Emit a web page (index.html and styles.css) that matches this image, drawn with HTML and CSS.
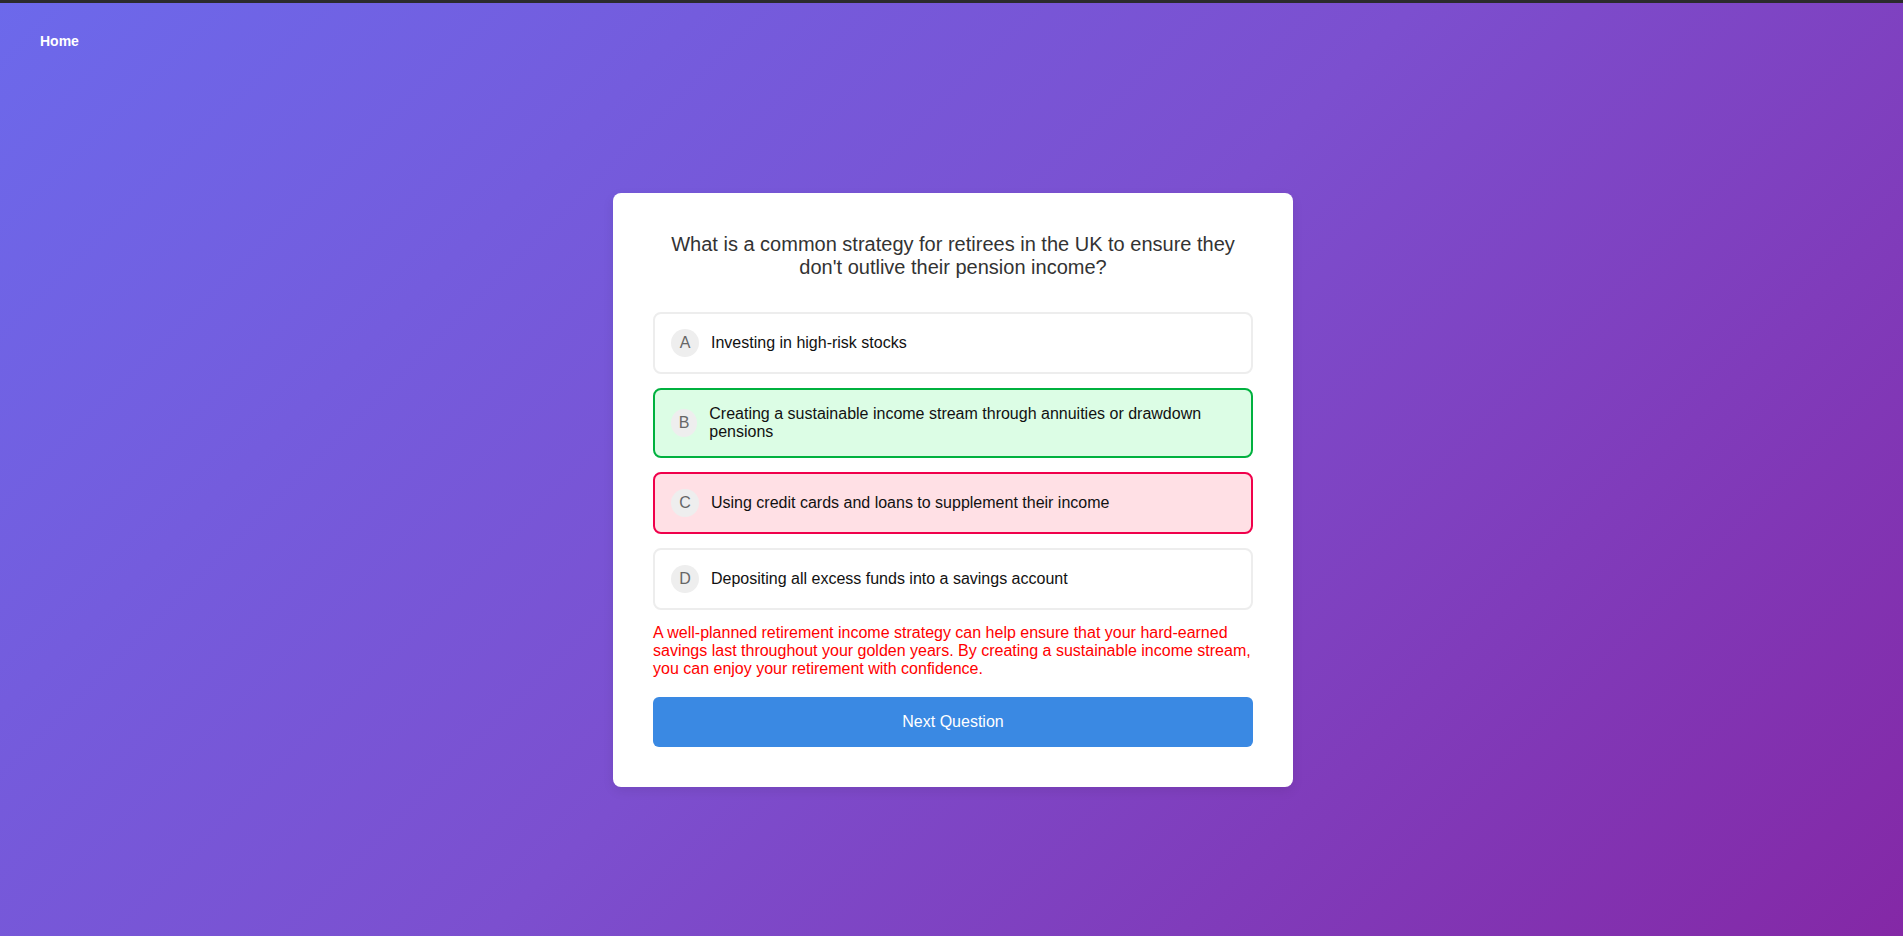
FILE: index.html
```html
<!DOCTYPE html>
<html lang="en">
<head>
<meta charset="utf-8">
<title>Quiz</title>
<link rel="stylesheet" href="styles.css">
</head>
<body>
<nav class="nav">
  <a class="nav-link" href="#">Home</a>
</nav>
<main class="main">
  <section class="card">
    <h2 class="question">What is a common strategy for retirees in the UK to ensure they don't outlive their pension income?</h2>
    <div class="options">
      <div class="option">
        <span class="badge">A</span>
        <span class="option-text">Investing in high-risk stocks</span>
      </div>
      <div class="option option-correct">
        <span class="badge">B</span>
        <span class="option-text">Creating a sustainable income stream through annuities or drawdown pensions</span>
      </div>
      <div class="option option-wrong">
        <span class="badge">C</span>
        <span class="option-text">Using credit cards and loans to supplement their income</span>
      </div>
      <div class="option">
        <span class="badge">D</span>
        <span class="option-text">Depositing all excess funds into a savings account</span>
      </div>
    </div>
    <p class="explanation">A well-planned retirement income strategy can help ensure that your hard-earned savings last throughout your golden years. By creating a sustainable income stream, you can enjoy your retirement with confidence.</p>
    <button class="next-btn">Next Question</button>
  </section>
</main>
</body>
</html>
```
FILE: styles.css
```css
* { box-sizing: border-box; }
html, body { height: 100%; }
body {
  margin: 0;
  min-height: 936px;
  font-family: "Liberation Sans", Arial, sans-serif;
  background: linear-gradient(135deg, #6c69eb 0%, #7c4fcf 50%, #8428a6 100%);
  border-top: 3px solid #2b2b2d;
}
.nav {
  padding: 29px 40px 0;
  height: 80px;
}
.nav-link {
  color: #ffffff;
  font-weight: bold;
  font-size: 14px;
  line-height: 16px;
  text-decoration: none;
  display: inline-block;
}
.main {
  display: flex;
  justify-content: center;
  padding-top: 110px;
  padding-left: 3px;
}
.card {
  width: 680px;
  background: #ffffff;
  border-radius: 8px;
  padding: 40px;
  box-shadow: 0 4px 12px rgba(0, 0, 0, 0.08);
}
.question {
  margin: 0 0 33px;
  font-size: 20px;
  font-weight: normal;
  line-height: 23px;
  color: #333333;
  text-align: center;
}
.options {
  display: flex;
  flex-direction: column;
  gap: 14px;
  margin-bottom: 14px;
}
.option {
  display: flex;
  align-items: center;
  gap: 12px;
  padding: 15px 16px;
  border: 2px solid #ededed;
  border-radius: 8px;
  background: #ffffff;
  font-size: 16px;
  color: #111111;
}
.option-correct {
  background: #dcfde5;
  border-color: #00b13f;
}
.option-wrong {
  background: #ffe0e5;
  border-color: #f0004b;
}
.badge {
  width: 28px;
  height: 28px;
  border-radius: 50%;
  background: #eeeeee;
  color: #666666;
  display: flex;
  align-items: center;
  justify-content: center;
  font-size: 16px;
}
.option-text {
  line-height: normal;
}
.explanation {
  margin: 0 0 19px;
  color: #ff0000;
  font-size: 16px;
  line-height: normal;
}
.next-btn {
  display: block;
  width: 100%;
  padding: 16px;
  border: none;
  border-radius: 6px;
  background: #3a89e3;
  color: #ffffff;
  font-family: "Liberation Sans", Arial, sans-serif;
  font-size: 16px;
  line-height: normal;
  cursor: pointer;
}
```
